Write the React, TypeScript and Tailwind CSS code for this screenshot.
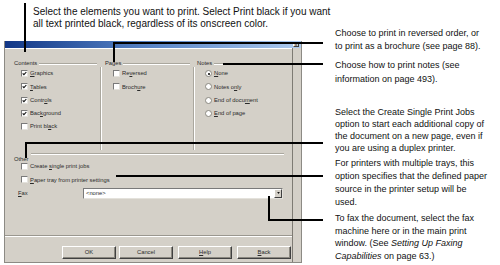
import React from "react";

function Check({ checked = false }: { checked?: boolean }) {
  return (
    <span className="flex items-center justify-center w-[7px] h-[7px] shrink-0 bg-white border border-t-[#7a7a7a] border-l-[#7a7a7a] border-b-[#e4e2dc] border-r-[#e4e2dc]">
      {checked && (
        <svg viewBox="0 0 6 6" className="w-[5px] h-[5px]">
          <path d="M0.8 2.8 L2.3 4.4 L5.2 1.2" stroke="#111" strokeWidth="1.3" fill="none" />
        </svg>
      )}
    </span>
  );
}

function Radio({ on = false }: { on?: boolean }) {
  return (
    <span className="flex items-center justify-center w-[7px] h-[7px] shrink-0 rounded-full bg-white border border-[#8a8880]">
      {on && <span className="w-[2px] h-[2px] rounded-full bg-black" />}
    </span>
  );
}

function Item({ children, mark }: { children: React.ReactNode; mark: React.ReactNode }) {
  return (
    <div className="flex items-center h-[13.25px] gap-[2px] whitespace-nowrap">
      {mark}
      <span>{children}</span>
    </div>
  );
}

function GroupHead({ label, pad, right }: { label: string; pad: string; right: string }) {
  return (
    <div className={`flex items-center h-[7px] ${pad}`}>
      <span className="whitespace-nowrap">{label}</span>
      <span className={`flex-1 ml-[2px] ${right} h-[2px] border-t border-[#aaa79e] border-b border-b-white`} />
    </div>
  );
}

function Btn({ children, ml }: { children: React.ReactNode; ml: string }) {
  return (
    <div
      className={`${ml} w-[54px] h-[13px] flex items-center justify-center bg-[#d4d0c8] border border-t-white border-l-white border-b-[#404040] border-r-[#404040] shadow-[inset_-1px_-1px_0_#8a877f]`}
    >
      {children}
    </div>
  );
}

function Dialog() {
  return (
    <div className="ml-[4px] mt-[14px] w-[298px] h-[222px] flex flex-col bg-[#d4d0c8] border-x border-b border-[#8c8a84] text-[5.8px] text-[#2a2a2a]">
      {/* title bar */}
      <div className="h-[7px] flex items-center justify-end pr-[2px] bg-gradient-to-r from-[#123787] via-[#5a86c8] to-[#aecbee]">
        <div className="w-[6px] h-[5px] bg-[#d4d0c8] border border-t-white border-l-white border-b-[#404040] border-r-[#404040] flex items-center justify-center text-[4px] leading-none text-black">
          x
        </div>
      </div>

      <div className="flex-1 flex">
        <div className="w-[288px] flex flex-col border-r border-[#7e7b74] shadow-[inset_0_1px_0_#fff]">
          {/* groups */}
          <div className="flex pt-[12px]">
            <div className="w-[95px] flex flex-col">
              <GroupHead label="Contents" pad="pl-[9px]" right="mr-[3px]" />
              <div className="h-[83px] pl-[16px]">
                <Item mark={<Check checked />}>
                  <u>G</u>raphics
                </Item>
                <Item mark={<Check checked />}>
                  <u>T</u>ables
                </Item>
                <Item mark={<Check checked />}>
                  Contr<u>o</u>ls
                </Item>
                <Item mark={<Check checked />}>
                  Bac<u>k</u>ground
                </Item>
                <Item mark={<Check />}>
                  Print bl<u>a</u>ck
                </Item>
              </div>
            </div>
            <div className="w-[93px] flex flex-col">
              <GroupHead label="Pages" pad="pl-[5px]" right="mr-[3px]" />
              <div className="h-[83px] pl-[12px] border-l border-[#aaa79e] shadow-[inset_1px_0_0_#fff]">
                <Item mark={<Check />}>
                  Re<u>v</u>ersed
                </Item>
                <Item mark={<Check />}>
                  Broch<u>u</u>re
                </Item>
              </div>
            </div>
            <div className="flex-1 flex flex-col">
              <GroupHead label="Notes" pad="pl-[4px]" right="mr-[8px]" />
              <div className="h-[83px] pl-[11px] border-l border-[#aaa79e] shadow-[inset_1px_0_0_#fff]">
                <Item mark={<Radio on />}>
                  <u>N</u>one
                </Item>
                <Item mark={<Radio />}>
                  Notes o<u>n</u>ly
                </Item>
                <Item mark={<Radio />}>
                  End of docu<u>m</u>ent
                </Item>
                <Item mark={<Radio />}>
                  <u>E</u>nd of page
                </Item>
              </div>
            </div>
          </div>

          {/* other */}
          <div className="mt-[3px] flex items-start h-[7px] pl-[9px]">
            <span className="mt-[2px]">Other</span>
            <span className="flex-1 ml-[2px] mr-[8px] h-[2px] border-t border-[#aaa79e] border-b border-b-white" />
          </div>
          <div className="pl-[16px]">
            <Item mark={<Check />}>
              Create <u>s</u>ingle print jobs
            </Item>
            <Item mark={<Check />}>
              <u>P</u>aper tray from printer settings
            </Item>
          </div>
          <div className="mt-[1px] flex items-center h-[11px] pl-[13px]">
            <span className="w-[65px]">
              <u>F</u>ax
            </span>
            <div className="w-[200px] h-[11px] flex items-center bg-white border border-t-[#7a7a7a] border-l-[#7a7a7a] border-b-[#e4e2dc] border-r-[#e4e2dc] pl-[2px]">
              <span className="flex-1">&lt;none&gt;</span>
              <div className="w-[8px] h-[9px] flex items-center justify-center bg-[#d4d0c8] border border-t-white border-l-white border-b-[#404040] border-r-[#404040]">
                <svg viewBox="0 0 4 3" className="w-[3px] h-[2px]">
                  <path d="M0 0 H4 L2 3 Z" fill="#111" />
                </svg>
              </div>
            </div>
          </div>

          <div className="flex-1" />
          <div className="h-[2px] border-t border-[#9a978f] border-b border-b-white" />
          <div className="flex mt-[9px] mb-[3px] pl-[57px]">
            <Btn ml="ml-0">OK</Btn>
            <Btn ml="ml-[3px]">Cancel</Btn>
            <Btn ml="ml-[5px]">
              <u>H</u>elp
            </Btn>
            <Btn ml="ml-[5px]">
              <u>B</u>ack
            </Btn>
          </div>
        </div>
        <div className="flex-1" />
      </div>
    </div>
  );
}

export default function App() {
  return (
    <div className="relative w-[500px] h-[265px] overflow-hidden bg-white text-[#111] font-['Liberation_Sans',Arial,sans-serif]">
      <p className="h-[27px] pl-[33px] pt-[6px] text-[10px] leading-[11.6px] whitespace-nowrap">
        Select the elements you want to print. Select Print black if you want
        <br />
        all text printed black, regardless of its onscreen color.
      </p>

      <div className="flex">
        <Dialog />

        {/* callout notes */}
        <div className="ml-[33px] flex flex-col text-[9px] whitespace-nowrap">
          <p className="leading-[13px]">
            Choose to print in reversed order, or
            <br />
            to print as a brochure (see page 88).
          </p>
          <p className="mt-[6px] leading-[13.5px]">
            Choose how to print notes (see
            <br />
            information on page 493).
          </p>
          <p className="mt-[20px] leading-[12px]">
            Select the Create Single Print Jobs
            <br />
            option to start each additional copy of
            <br />
            the document on a new page, even if
            <br />
            you are using a duplex printer.
          </p>
          <p className="mt-[3px] leading-[13px]">
            For printers with multiple trays, this
            <br />
            option specifies that the defined paper
            <br />
            source in the printer setup will be
            <br />
            used.
          </p>
          <p className="mt-[3px] leading-[12.7px]">
            To fax the document, select the fax
            <br />
            machine here or in the main print
            <br />
            window. (See <i>Setting Up Faxing</i>
            <br />
            <i>Capabilities</i> on page 63.)
          </p>
        </div>
      </div>

      {/* leader lines */}
      <div className="absolute left-[24px] top-[3px] w-[2px] h-[49px] bg-black" />
      <div className="absolute left-[113px] top-[42px] w-[210px] h-[2px] bg-black" />
      <div className="absolute left-[113px] top-[42px] w-[2px] h-[20px] bg-black" />
      <div className="absolute left-[223px] top-[63px] w-[100px] h-[2px] bg-black" />
      <div className="absolute left-[25px] top-[142px] w-[298px] h-[2px] bg-black" />
      <div className="absolute left-[25px] top-[142px] w-[2px] h-[16px] bg-black" />
      <div className="absolute left-[116px] top-[175px] w-[207px] h-[2px] bg-black" />
      <div className="absolute left-[268px] top-[196px] w-[2px] h-[25px] bg-black" />
      <div className="absolute left-[268px] top-[219px] w-[55px] h-[2px] bg-black" />
    </div>
  );
}
